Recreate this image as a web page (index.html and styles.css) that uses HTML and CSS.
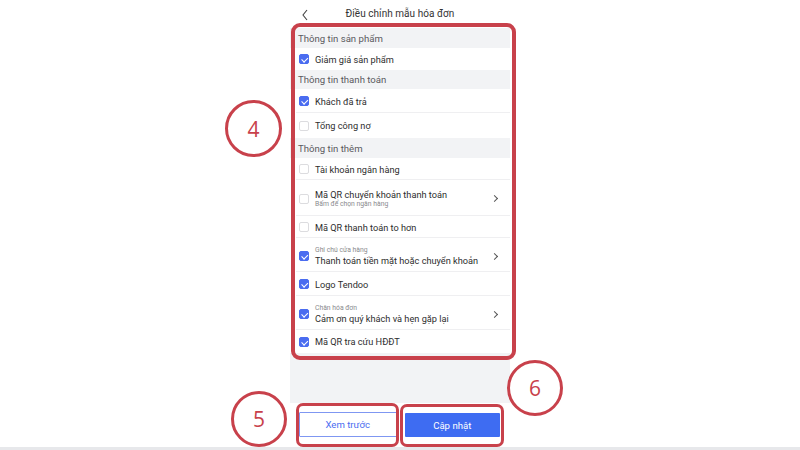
FILE: index.html
```html
<!DOCTYPE html>
<html lang="vi">
<head>
<meta charset="utf-8">
<title>Điều chỉnh mẫu hóa đơn</title>
<link rel="stylesheet" href="styles.css">
</head>
<body>
<div class="stage">
  <div class="phone">
    <header class="topbar">
      <svg class="back" width="8" height="12" viewBox="0 0 8 12"><polyline points="6,1 2,6 6,11" fill="none" stroke="#444" stroke-width="1.1"/></svg>
      <span class="title">Điều chỉnh mẫu hóa đơn</span>
    </header>
    <div class="list">
      <div class="sect">Thông tin sản phẩm</div>
      <div class="row r22"><span class="cb on"></span><span class="label">Giảm giá sản phẩm</span></div>
      <div class="sect s19">Thông tin thanh toán</div>
      <div class="row r24 line"><span class="cb on"></span><span class="label">Khách đã trả</span></div>
      <div class="row r25"><span class="cb"></span><span class="label">Tổng công nợ</span></div>
      <div class="sect">Thông tin thêm</div>
      <div class="row r22 line"><span class="cb"></span><span class="label">Tài khoản ngân hàng</span></div>
      <div class="row two r36 line"><span class="cb"></span><div class="txt"><span class="label">Mã QR chuyển khoản thanh toán</span><span class="sub">Bấm để chọn ngân hàng</span></div><span class="chev"></span></div>
      <div class="row r22 line"><span class="cb"></span><span class="label">Mã QR thanh toán to hơn</span></div>
      <div class="row two line"><span class="cb on"></span><div class="txt"><span class="sub">Ghi chú cửa hàng</span><span class="label">Thanh toán tiền mặt hoặc chuyển khoản</span></div><span class="chev"></span></div>
      <div class="row r24 line"><span class="cb on"></span><span class="label">Logo Tendoo</span></div>
      <div class="row two line"><span class="cb on"></span><div class="txt"><span class="sub">Chân hóa đơn</span><span class="label">Cảm ơn quý khách và hẹn gặp lại</span></div><span class="chev"></span></div>
      <div class="row r23"><span class="cb on"></span><span class="label">Mã QR tra cứu HĐĐT</span></div>
    </div>
    <div class="spacer"></div>
    <div class="actions">
      <button class="btn outline">Xem trước</button>
      <button class="btn primary">Cập nhật</button>
    </div>
  </div>

  <div class="mark box-list"></div>
  <div class="mark box-preview"></div>
  <div class="mark box-update"></div>
  <div class="badge b4">4</div>
  <div class="badge b5">5</div>
  <div class="badge b6">6</div>
</div>
<div class="bottom-line"></div>
</body>
</html>
```
FILE: styles.css
```css
* { box-sizing: border-box; }
html, body { margin: 0; padding: 0; }
body {
  width: 800px;
  height: 450px;
  background: #fff;
  font-family: "Roboto", "Inter", "Noto Sans", sans-serif;
  color: #2b2b2b;
  overflow: hidden;
}
.stage {
  position: relative;
  width: 800px;
  height: 447px;
  display: flex;
  justify-content: center;
}
.phone {
  width: 220px;
  height: 447px;
  background: #f2f3f5;
  display: flex;
  flex-direction: column;
}
.topbar {
  height: 28px;
  background: #fff;
  display: flex;
  align-items: center;
  justify-content: center;
  position: relative;
}
.topbar .back {
  position: absolute;
  left: 11px;
  top: 9px;
}
.title {
  font-size: 10px;
  color: #333;
  margin-top: -2px;
  letter-spacing: 0.05px;
}
.list { display: flex; flex-direction: column; }
.sect {
  height: 20px;
  padding-left: 8px;
  display: flex;
  align-items: center;
  font-size: 9.6px;
  color: #5a5a5e;
  background: #f2f3f5;
}
.sect.s19 { height: 19px; }
.row {
  background: #fff;
  display: flex;
  align-items: center;
  padding: 0 11px 0 9px;
  position: relative;
}
.row.line::after {
  content: "";
  position: absolute;
  left: 6px;
  right: 0;
  bottom: 0;
  height: 1px;
  background: #efeff1;
}
.r22 { height: 22px; }
.r23 { height: 23px; }
.r24 { height: 24px; }
.r25 { height: 25px; }
.row.two { height: 34px; padding-top: 2px; }
.row.two.r36 { height: 36px; padding-top: 1px; }
.cb {
  width: 10px;
  height: 10px;
  border: 1px solid #dcdcdf;
  border-radius: 2px;
  background: #fff;
  flex: none;
  margin-right: 6px;
  position: relative;
}
.cb.on {
  background: #4a6cf0;
  border-color: #4a6cf0;
}
.cb.on::after {
  content: "";
  position: absolute;
  left: 2.6px;
  top: 1px;
  width: 2.5px;
  height: 4.5px;
  border: solid #fff;
  border-width: 0 1.2px 1.2px 0;
  transform: rotate(45deg);
}
.label {
  font-size: 9.2px;
  color: #2e2e2e;
  white-space: nowrap;
}
.txt {
  display: flex;
  flex-direction: column;
  flex: 1;
  line-height: 1.2;
}
.sub {
  font-size: 6.8px;
  color: #8a8a8e;
}
.chev {
  width: 5px;
  height: 5px;
  border: solid #555;
  border-width: 1px 1px 0 0;
  transform: rotate(45deg);
  margin-left: auto;
  margin-right: 2px;
  flex: none;
}
.spacer { flex: 1; }
.actions {
  height: 44px;
  background: #fff;
  display: flex;
  gap: 8px;
  padding: 9px 10px 0 9px;
}
.btn {
  flex: 1;
  height: 25px;
  font-family: inherit;
  font-size: 9.6px;
  border-radius: 1px;
  cursor: pointer;
}
.btn.outline {
  background: #fff;
  color: #4a6cf0;
  border: 1px solid #7f97f2;
}
.btn.primary {
  background: #3e6cf2;
  color: #fff;
  border: none;
  margin-top: 1px;
  height: 24px;
}
.mark {
  position: absolute;
  border: 4px solid #c8414b;
  border-radius: 9px;
}
.box-list { left: 291px; top: 23px; width: 225px; height: 337px; }
.box-preview { left: 296px; top: 403px; width: 103px; height: 44px; border-width: 3.5px; border-radius: 7px; }
.box-update { left: 400px; top: 404px; width: 104px; height: 43px; border-width: 3.5px; border-radius: 7px; }
.badge {
  position: absolute;
  width: 57px;
  height: 57px;
  border: 3px solid #c8414b;
  border-radius: 50%;
  color: #c8414b;
  font-family: "Open Sans", "Inter", sans-serif;
  font-size: 21px;
  font-weight: 500;
  display: flex;
  align-items: center;
  justify-content: center;
}
.b4 { left: 225px; top: 100px; }
.b5 { left: 231px; top: 391px; width: 56px; height: 56px; }
.b6 { left: 507px; top: 360px; width: 56px; height: 56px; }
.bottom-line {
  height: 3px;
  background: #e7e8eb;
}
```
